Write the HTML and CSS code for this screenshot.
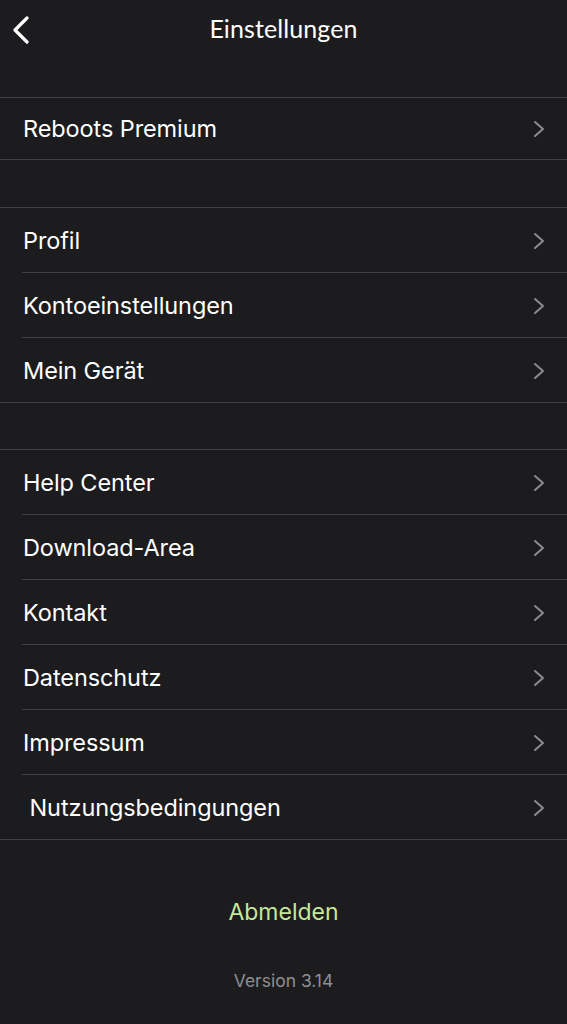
FILE: index.html
```html
<!DOCTYPE html>
<html>
<head>
    <title>Einstellungen</title>
    <link rel="stylesheet" href="styles.css">
</head>
<body>
    <div class="screen">
        <div class="nav-bar">
            <div class="back-btn">
                <svg width="18" height="28" viewBox="0 0 18 28">
                    <path d="M15 2 L3 14 L15 26" fill="none" stroke="#fff" stroke-width="3.2" stroke-linecap="round" stroke-linejoin="round"/>
                </svg>
            </div>
            <h1 class="nav-title">Einstellungen</h1>
        </div>

        <div class="group group-first">
            <div class="row row-short">
                <span class="row-label">Reboots Premium</span>
                <svg class="chevron" width="12" height="18" viewBox="0 0 12 18"><path d="M2 2 L10 9 L2 16" fill="none" stroke="#8b8b90" stroke-width="2" stroke-linecap="round" stroke-linejoin="round"/></svg>
            </div>
        </div>

        <div class="group">
            <div class="row">
                <span class="row-label">Profil</span>
                <svg class="chevron" width="12" height="18" viewBox="0 0 12 18"><path d="M2 2 L10 9 L2 16" fill="none" stroke="#8b8b90" stroke-width="2" stroke-linecap="round" stroke-linejoin="round"/></svg>
            </div>
            <div class="row">
                <span class="row-label">Kontoeinstellungen</span>
                <svg class="chevron" width="12" height="18" viewBox="0 0 12 18"><path d="M2 2 L10 9 L2 16" fill="none" stroke="#8b8b90" stroke-width="2" stroke-linecap="round" stroke-linejoin="round"/></svg>
            </div>
            <div class="row">
                <span class="row-label">Mein Gerät</span>
                <svg class="chevron" width="12" height="18" viewBox="0 0 12 18"><path d="M2 2 L10 9 L2 16" fill="none" stroke="#8b8b90" stroke-width="2" stroke-linecap="round" stroke-linejoin="round"/></svg>
            </div>
        </div>

        <div class="group group-last">
            <div class="row">
                <span class="row-label">Help Center</span>
                <svg class="chevron" width="12" height="18" viewBox="0 0 12 18"><path d="M2 2 L10 9 L2 16" fill="none" stroke="#8b8b90" stroke-width="2" stroke-linecap="round" stroke-linejoin="round"/></svg>
            </div>
            <div class="row">
                <span class="row-label">Download-Area</span>
                <svg class="chevron" width="12" height="18" viewBox="0 0 12 18"><path d="M2 2 L10 9 L2 16" fill="none" stroke="#8b8b90" stroke-width="2" stroke-linecap="round" stroke-linejoin="round"/></svg>
            </div>
            <div class="row">
                <span class="row-label">Kontakt</span>
                <svg class="chevron" width="12" height="18" viewBox="0 0 12 18"><path d="M2 2 L10 9 L2 16" fill="none" stroke="#8b8b90" stroke-width="2" stroke-linecap="round" stroke-linejoin="round"/></svg>
            </div>
            <div class="row">
                <span class="row-label">Datenschutz</span>
                <svg class="chevron" width="12" height="18" viewBox="0 0 12 18"><path d="M2 2 L10 9 L2 16" fill="none" stroke="#8b8b90" stroke-width="2" stroke-linecap="round" stroke-linejoin="round"/></svg>
            </div>
            <div class="row">
                <span class="row-label">Impressum</span>
                <svg class="chevron" width="12" height="18" viewBox="0 0 12 18"><path d="M2 2 L10 9 L2 16" fill="none" stroke="#8b8b90" stroke-width="2" stroke-linecap="round" stroke-linejoin="round"/></svg>
            </div>
            <div class="row">
                <span class="row-label">&nbsp;Nutzungsbedingungen</span>
                <svg class="chevron" width="12" height="18" viewBox="0 0 12 18"><path d="M2 2 L10 9 L2 16" fill="none" stroke="#8b8b90" stroke-width="2" stroke-linecap="round" stroke-linejoin="round"/></svg>
            </div>
        </div>

        <div class="logout">Abmelden</div>
        <div class="version">Version 3.14</div>
    </div>
</body>
</html>
```

FILE: styles.css
```css
html, body { margin: 0; padding: 0; background: #1c1c1e; }
body { font-family: Inter, "Liberation Sans", sans-serif; color: #fff; }
.screen { width: 567px; height: 1024px; overflow: hidden; }

/* nav bar */
.nav-bar { height: 97px; display: flex; align-items: flex-start; position: relative; }
.back-btn { position: absolute; left: 12px; top: 16px; }
.nav-title { flex: 1; margin: 0; padding-top: 13px; text-align: center; font-family: Lato, "Noto Sans", sans-serif; font-weight: 400; font-size: 25px; letter-spacing: 0.1px; color: #fff; }

/* groups of rows */
.group { border-top: 1px solid #414144; border-bottom: 1px solid #414144; margin-top: 47px; }
.group-first { margin-top: 0; }
.group-last { margin-top: 46px; }
.row { height: 64px; display: flex; align-items: center; justify-content: space-between; padding: 0 22px 0 23px; position: relative; }
.row-short { height: 61px; }
.row + .row { border-top: 1px solid #414144; margin-left: 22px; padding-left: 1px; }
.row-label { font-size: 23.5px; letter-spacing: -0.1px; }
.chevron { margin-top: 1px; }

/* footer */
.logout { text-align: center; color: #c5e89c; font-size: 23px; margin-top: 58px; line-height: 28px; }
.version { text-align: center; color: #8e8e93; font-size: 17.5px; margin-top: 45px; line-height: 20px; }
```
